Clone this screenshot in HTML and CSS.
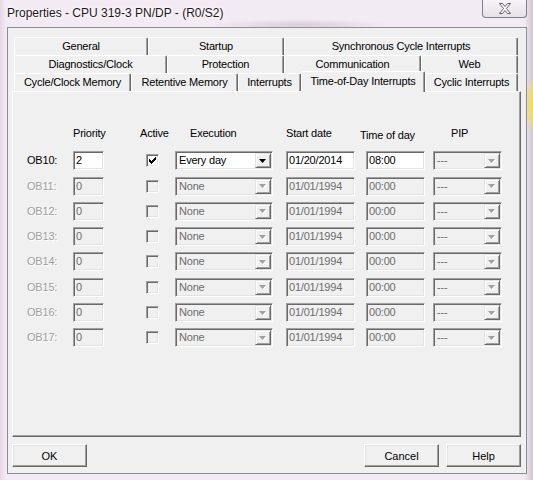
FILE: index.html
```html
<!DOCTYPE html>
<html lang="en">
<head>
  <meta charset="UTF-8" />
  <title>Properties - CPU 319-3 PN/DP - (R0/S2)</title>
  <link rel="stylesheet" href="styles.css">
</head>
<body>
  <div class="window">
    <div class="titlebar">
      <span class="title">Properties - CPU 319-3 PN/DP - (R0/S2)</span>
      <div class="close">
        <svg width="14" height="11" viewBox="0 0 14 11">
          <path d="M1.5 0.5h3l2.5 3l2.5-3h3l-4 5l4 5h-3l-2.5-3l-2.5 3h-3l4-5z" fill="#fff" stroke="#5f5f6a" stroke-width="1"/>
        </svg>
      </div>
    </div>

    <div class="client">
      <div class="tabs">
        <div class="tab-row row-1">
          <div class="tab">General</div>
          <div class="tab">Startup</div>
          <div class="tab">Synchronous Cycle Interrupts</div>
        </div>
        <div class="tab-row row-2">
          <div class="tab">Diagnostics/Clock</div>
          <div class="tab">Protection</div>
          <div class="tab">Communication</div>
          <div class="tab">Web</div>
        </div>
        <div class="tab-row row-3">
          <div class="tab">Cycle/Clock Memory</div>
          <div class="tab">Retentive Memory</div>
          <div class="tab">Interrupts</div>
          <div class="tab active">Time-of-Day Interrupts</div>
          <div class="tab">Cyclic Interrupts</div>
        </div>
      </div>

      <div class="panel">
        <div class="ob-grid" id="obGrid">
          <div class="head"></div>
          <div class="head">Priority</div>
          <div class="head h-active">Active</div>
          <div class="head h-exec">Execution</div>
          <div class="head h-start">Start date</div>
          <div class="head h-time">Time of day</div>
          <div class="head h-pip">PIP</div>
        </div>
      </div>

      <div class="buttons">
        <button class="btn">OK</button>
        <span class="spacer"></span>
        <button class="btn">Cancel</button>
        <button class="btn">Help</button>
      </div>
    </div>
  </div>

  <script>
    const rows = [
      { ob: 'OB10:', prio: '2', active: true, exec: 'Every day', date: '01/20/2014', time: '08:00' },
      { ob: 'OB11:', prio: '0' },
      { ob: 'OB12:', prio: '0' },
      { ob: 'OB13:', prio: '0' },
      { ob: 'OB14:', prio: '0' },
      { ob: 'OB15:', prio: '0' },
      { ob: 'OB16:', prio: '0' },
      { ob: 'OB17:', prio: '0' }
    ];

    const arrow = (on) => `
      <span class="arrow">
        <svg width="8" height="5" viewBox="0 0 8 5">
          ${on ? '' : '<path d="M1 1h7l-3.5 4z" fill="#fff"/>'}
          <path d="M0 0h7l-3.5 4z" fill="${on ? '#000' : '#a0a0a0'}"/>
        </svg>
      </span>`;

    const tick = `
      <svg width="9" height="9" viewBox="0 0 9 9">
        <path d="M1 3h1v3h-1z M2 4h1v3h-1z M3 5h1v3h-1z M4 4h1v3h-1z M5 3h1v3h-1z M6 2h1v3h-1z M7 1h1v3h-1z" fill="#000"/>
      </svg>`;

    const grid = document.getElementById('obGrid');
    let html = '';

    rows.forEach((r) => {
      const on = !!r.active;
      const off = on ? '' : ' off';
      html += `
        <div class="ob-label${off}">${r.ob}</div>
        <div class="field${off}">${r.prio}</div>
        <div class="check-cell"><span class="check${off}">${on ? tick : ''}</span></div>
        <div class="field combo${off}"><span class="combo-text">${r.exec || 'None'}</span>${arrow(on)}</div>
        <div class="field date${off}">${r.date || '01/01/1994'}</div>
        <div class="field tod${off}">${r.time || '00:00'}</div>
        <div class="field combo pip off"><span class="combo-text">---</span>${arrow(false)}</div>`;
    });

    grid.insertAdjacentHTML('beforeend', html);
  </script>
</body>
</html>
```

FILE: styles.css
```css
* {
  margin: 0;
  padding: 0;
  box-sizing: border-box;
}

body {
  width: 533px;
  height: 480px;
  overflow: hidden;
  font-family: "Liberation Sans", Arial, sans-serif;
  font-size: 11px;
  color: #000;
}

.window {
  width: 533px;
  height: 480px;
  display: flex;
  flex-direction: column;
  background:
    radial-gradient(ellipse 9px 28px at 533px 104px, #f3df55 0%, rgba(243, 223, 85, 0.7) 45%, rgba(243, 223, 85, 0) 100%),
    radial-gradient(ellipse 90px 6px at 300px 25px, rgba(190, 175, 190, 0.5), rgba(190, 175, 190, 0)),
    linear-gradient(90deg, #e6d7e6 0, #f3ebf3 6px, #f3ebf3 524px, #cfc6cf 533px);
}

.titlebar {
  height: 27px;
  display: flex;
  justify-content: space-between;
  align-items: flex-start;
  padding-left: 7px;
}

.title {
  font-size: 12px;
  line-height: 27px;
  color: #1a1a1a;
  text-shadow: 0 0 6px #fff, 0 0 3px #fff;
}

.close {
  width: 45px;
  height: 18px;
  margin-right: 6px;
  border: 1px solid #80808c;
  border-top: none;
  border-radius: 0 0 4px 4px;
  background: linear-gradient(#f8f4f8, #e6e0e8);
  display: flex;
  align-items: center;
  justify-content: center;
}

.client {
  flex: 1;
  margin: 0 6px 6px 7px;
  border: 1px solid #8c8c94;
  background: #f0f0f0;
  padding: 9px 5px 6px 4px;
  display: flex;
  flex-direction: column;
  letter-spacing: -0.2px;
}

.tabs {
  padding: 0 3px 0 2px;
}

.tab-row {
  display: grid;
  height: 18px;
}

.row-1 {
  grid-template-columns: 134px 136px 1fr;
}

.row-2 {
  grid-template-columns: 153px 117px 137px 1fr;
}

.row-3 {
  grid-template-columns: 117px 107px 63px 124px 1fr;
}

.tab {
  border: 1px solid;
  border-color: #fff #696969 transparent #fff;
  border-bottom: none;
  border-radius: 2px 2px 0 0;
  box-shadow: inset -1px 0 #a0a0a0;
  text-align: center;
  line-height: 17px;
  white-space: nowrap;
  overflow: hidden;
}

.tab.active {
  position: relative;
  z-index: 1;
  margin: -2px 0 -1px 0;
  line-height: 18px;
  background: #f0f0f0;
}

.panel {
  flex: 1;
  border: 1px solid;
  border-color: #fff #696969 #696969 #fff;
  box-shadow: inset -1px -1px #a0a0a0;
  padding: 35px 0 0 14px;
}

.ob-grid {
  display: grid;
  grid-template-columns: 46px 31px 71px 98px 82px 70px 77px;
  grid-template-rows: 18px;
  grid-auto-rows: 19px;
  row-gap: 6.3px;
}

.head {
  line-height: 13px;
  white-space: nowrap;
}

.h-active {
  padding-left: 36px;
}

.h-exec {
  padding-left: 15px;
}

.h-start {
  padding-left: 13px;
}

.h-time {
  padding-left: 5px;
  margin-top: 2px;
}

.h-pip {
  padding-left: 26px;
}

.ob-label {
  line-height: 19px;
}

.ob-label.off {
  color: #a0a0a0;
  text-shadow: 1px 1px 0 #fff;
}

.field {
  height: 19px;
  border: 1px solid;
  border-color: #a0a0a0 #fff #fff #a0a0a0;
  box-shadow: inset 1px 1px #696969, inset -1px -1px #e3e3e3;
  background: #fff;
  padding: 1px 1px 1px 2px;
  line-height: 15px;
  white-space: nowrap;
}

.field.off {
  background: #f0f0f0;
  color: #6d6d6d;
}

.date {
  width: 69px;
  justify-self: end;
}

.tod,
.pip {
  width: 59px;
  justify-self: end;
}

.pip {
  width: 69px;
}

.combo {
  display: flex;
}

.combo-text {
  flex: 1;
  padding-left: 1px;
}

.arrow {
  width: 16px;
  height: 15px;
  border: 1px solid;
  border-color: #e3e3e3 #696969 #696969 #e3e3e3;
  box-shadow: inset 1px 1px #fff, inset -1px -1px #a0a0a0;
  background: #f0f0f0;
  display: flex;
  align-items: center;
  justify-content: center;
  padding-top: 1px;
}

.check-cell {
  padding: 3px 0 0 42px;
}

.check {
  display: block;
  width: 13px;
  height: 13px;
  border: 1px solid;
  border-color: #a0a0a0 #fff #fff #a0a0a0;
  box-shadow: inset 1px 1px #696969, inset -1px -1px #e3e3e3;
  background: #fff;
  padding: 1px;
}

.check svg {
  display: block;
}

.check.off {
  background: #f0f0f0;
}

.buttons {
  display: flex;
  gap: 7px;
  margin-top: 7px;
}

.spacer {
  flex: 1;
}

.btn {
  width: 75px;
  height: 23px;
  border: 1px solid;
  border-color: #fff #696969 #696969 #fff;
  box-shadow: inset -1px -1px #a0a0a0, inset 1px 1px #e3e3e3;
  background: #f0f0f0;
  font: inherit;
  color: #000;
}
```
